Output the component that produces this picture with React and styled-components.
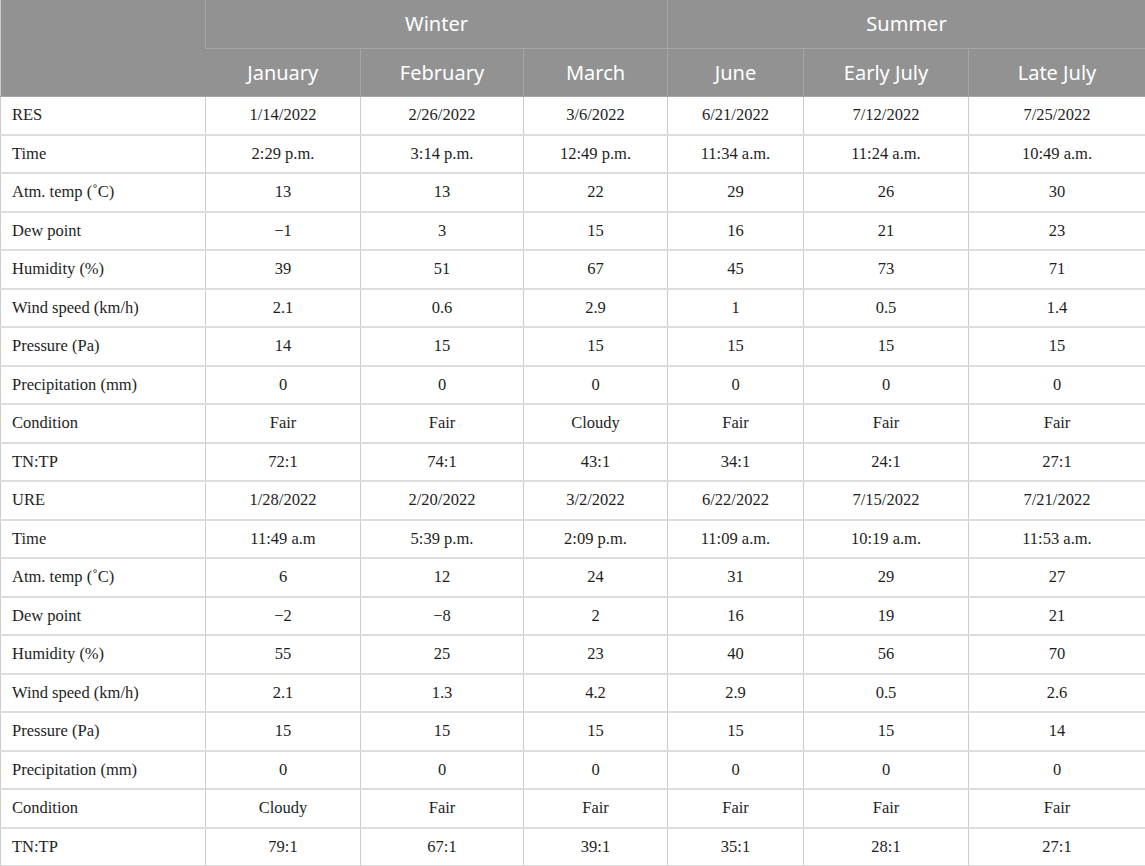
import React from "react";
import styled, { createGlobalStyle } from "styled-components";

const GlobalStyle = createGlobalStyle`
  * {
    margin: 0;
    padding: 0;
    box-sizing: border-box;
  }
  body {
    background: #ffffff;
  }
`;

const Table = styled.table`
  width: 1145px;
  border-collapse: collapse;
  table-layout: fixed;
  border-left: 1px solid #c8c8c8;
  border-right: 1px solid #c8c8c8;
`;

const HeadCell = styled.th`
  background: #929292;
  color: #ffffff;
  font-family: "Noto Sans", "Open Sans", sans-serif;
  font-weight: 400;
  font-size: 20px;
  height: 48px;
  text-align: center;
  vertical-align: middle;
  border-left: 1px solid #a6a6a6;
  border-bottom: 1px solid #a6a6a6;
  &:first-child {
    border-left: none;
  }
`;

const Row = styled.tr`
  height: 38.5px;
`;

const Cell = styled.td`
  font-family: "Liberation Serif", "Times New Roman", serif;
  font-size: 16.5px;
  color: #1e1e1e;
  text-align: ${(p) => (p.$label ? "left" : "center")};
  padding-left: ${(p) => (p.$label ? "11px" : "0")};
  vertical-align: middle;
  border-left: 1px solid #cccccc;
  border-bottom: 2px solid #dddddd;
  white-space: nowrap;
`;

const widths = [205, 155, 163, 144, 136, 165, 177];
const months = ["January", "February", "March", "June", "Early July", "Late July"];

const rows = [
  ["RES", "1/14/2022", "2/26/2022", "3/6/2022", "6/21/2022", "7/12/2022", "7/25/2022"],
  ["Time", "2:29 p.m.", "3:14 p.m.", "12:49 p.m.", "11:34 a.m.", "11:24 a.m.", "10:49 a.m."],
  ["Atm. temp (˚C)", "13", "13", "22", "29", "26", "30"],
  ["Dew point", "−1", "3", "15", "16", "21", "23"],
  ["Humidity (%)", "39", "51", "67", "45", "73", "71"],
  ["Wind speed (km/h)", "2.1", "0.6", "2.9", "1", "0.5", "1.4"],
  ["Pressure (Pa)", "14", "15", "15", "15", "15", "15"],
  ["Precipitation (mm)", "0", "0", "0", "0", "0", "0"],
  ["Condition", "Fair", "Fair", "Cloudy", "Fair", "Fair", "Fair"],
  ["TN:TP", "72:1", "74:1", "43:1", "34:1", "24:1", "27:1"],
  ["URE", "1/28/2022", "2/20/2022", "3/2/2022", "6/22/2022", "7/15/2022", "7/21/2022"],
  ["Time", "11:49 a.m", "5:39 p.m.", "2:09 p.m.", "11:09 a.m.", "10:19 a.m.", "11:53 a.m."],
  ["Atm. temp (˚C)", "6", "12", "24", "31", "29", "27"],
  ["Dew point", "−2", "−8", "2", "16", "19", "21"],
  ["Humidity (%)", "55", "25", "23", "40", "56", "70"],
  ["Wind speed (km/h)", "2.1", "1.3", "4.2", "2.9", "0.5", "2.6"],
  ["Pressure (Pa)", "15", "15", "15", "15", "15", "14"],
  ["Precipitation (mm)", "0", "0", "0", "0", "0", "0"],
  ["Condition", "Cloudy", "Fair", "Fair", "Fair", "Fair", "Fair"],
  ["TN:TP", "79:1", "67:1", "39:1", "35:1", "28:1", "27:1"],
];

export default function App() {
  return (
    <>
      <GlobalStyle />
      <Table>
        <colgroup>
          {widths.map((w, i) => (
            <col key={i} style={{ width: w }} />
          ))}
        </colgroup>
        <thead>
          <tr>
            <HeadCell rowSpan={2} />
            <HeadCell colSpan={3}>Winter</HeadCell>
            <HeadCell colSpan={3}>Summer</HeadCell>
          </tr>
          <tr>
            {months.map((m) => (
              <HeadCell key={m}>{m}</HeadCell>
            ))}
          </tr>
        </thead>
        <tbody>
          {rows.map((r, i) => (
            <Row key={i}>
              {r.map((c, j) => (
                <Cell key={j} $label={j === 0}>
                  {c}
                </Cell>
              ))}
            </Row>
          ))}
        </tbody>
      </Table>
    </>
  );
}
